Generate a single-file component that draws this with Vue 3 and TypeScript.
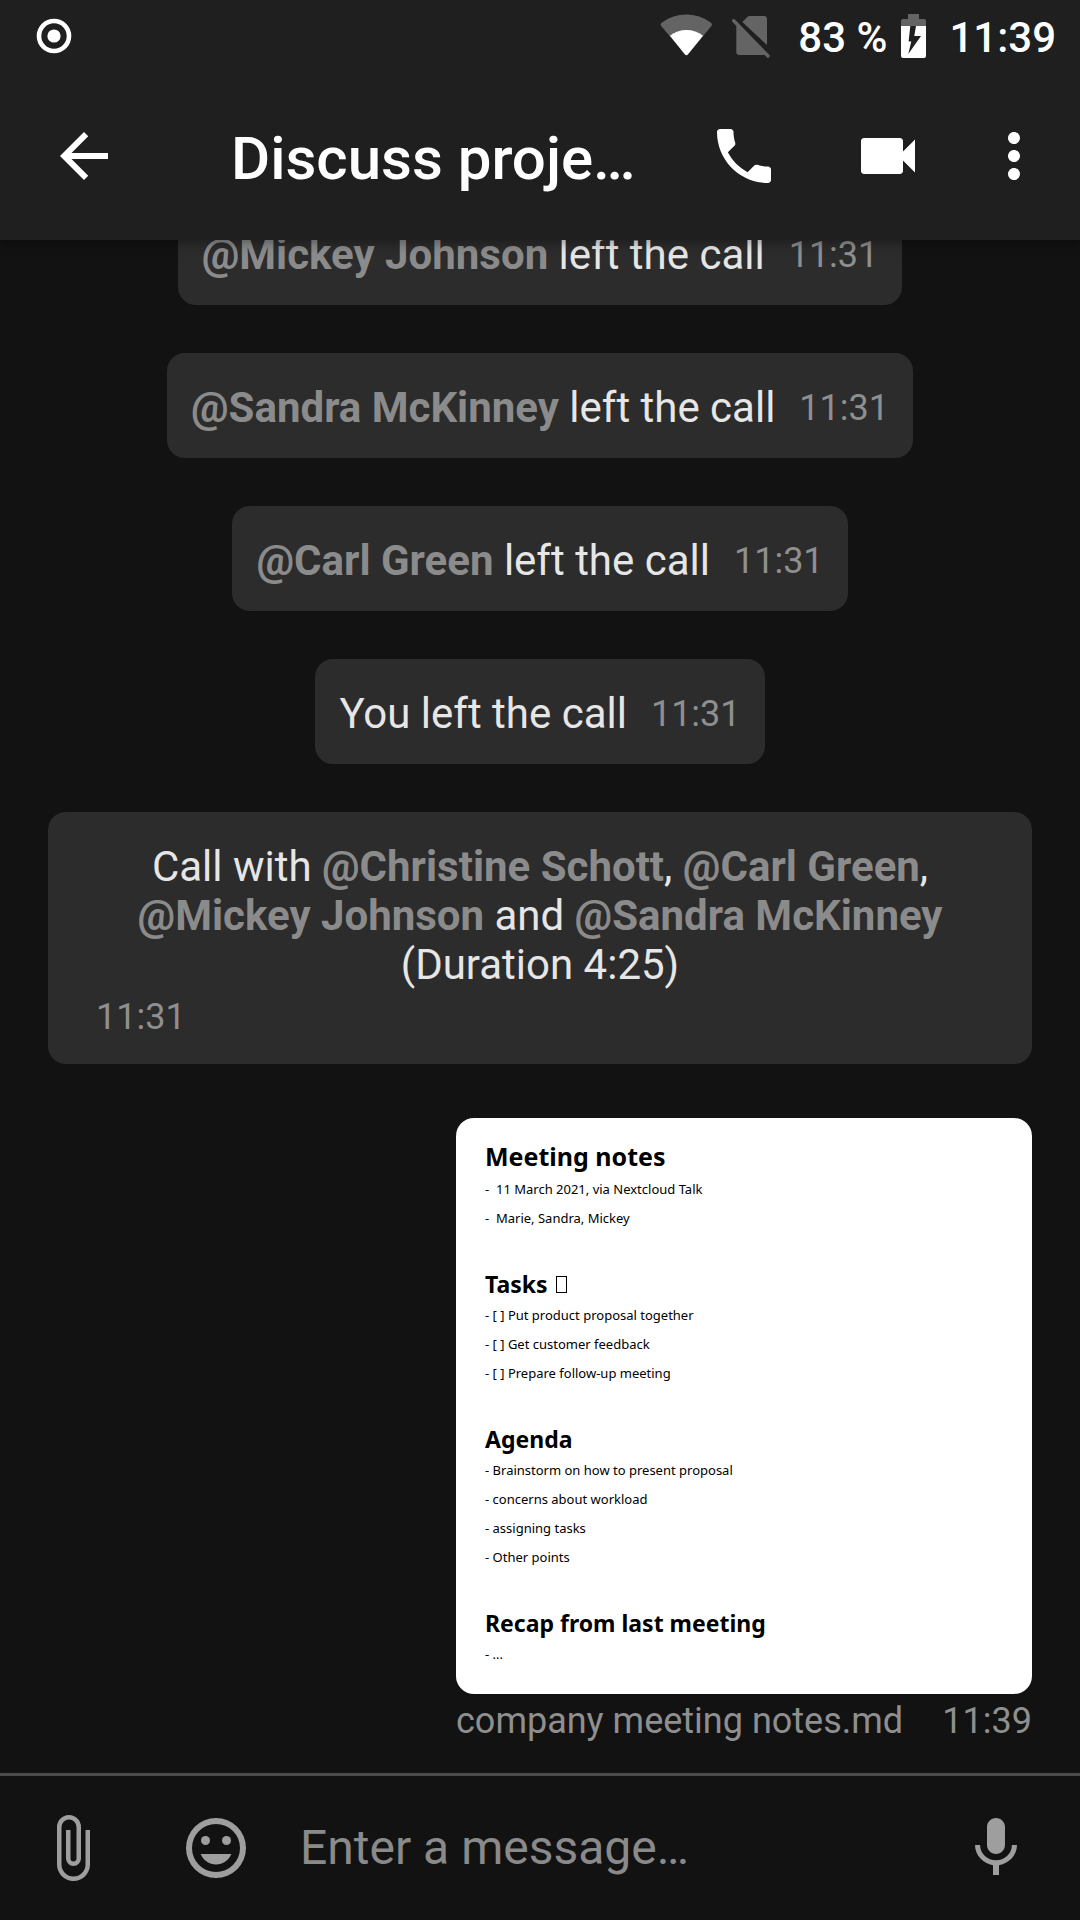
<script setup lang="ts">
import { ref } from 'vue'

interface Part {
  text: string
  mention?: boolean
}

interface SystemMessage {
  id: number
  parts: Part[]
  time: string
}

interface NoteSection {
  title: string
  marker: string
  missingGlyph?: boolean
  items: string[]
}

const leftCall = (id: number, name: string): SystemMessage => ({
  id,
  parts: [{ text: '@' + name, mention: true }, { text: ' left the call' }],
  time: '11:31',
})

const systemMessages: SystemMessage[] = [
  leftCall(1, 'Mickey Johnson'),
  leftCall(2, 'Sandra McKinney'),
  leftCall(3, 'Carl Green'),
  { id: 4, parts: [{ text: 'You left the call' }], time: '11:31' },
  {
    id: 5,
    parts: [
      { text: 'Call with ' },
      { text: '@Christine Schott', mention: true },
      { text: ', ' },
      { text: '@Carl Green', mention: true },
      { text: ', ' },
      { text: '@Mickey Johnson', mention: true },
      { text: ' and ' },
      { text: '@Sandra McKinney', mention: true },
      { text: ' (Duration 4:25)' },
    ],
    time: '11:31',
  },
]

const sections: NoteSection[] = [
  {
    title: 'Meeting notes',
    marker: '-  ',
    items: ['11 March 2021, via Nextcloud Talk', 'Marie, Sandra, Mickey'],
  },
  {
    title: 'Tasks',
    marker: '- [ ] ',
    missingGlyph: true,
    items: ['Put product proposal together', 'Get customer feedback', 'Prepare follow-up meeting'],
  },
  {
    title: 'Agenda',
    marker: '- ',
    items: ['Brainstorm on how to present proposal', 'concerns about workload', 'assigning tasks', 'Other points'],
  },
  { title: 'Recap from last meeting', marker: '- ', items: ['...'] },
]

const draft = ref('')
</script>

<template>
  <div class="screen">
    <header class="top">
      <div class="status">
        <svg class="record" width="36" height="36" viewBox="0 0 36 36" aria-hidden="true">
          <circle cx="18" cy="18" r="15" fill="none" stroke="#fff" stroke-width="4.6" />
          <circle cx="18" cy="18" r="6.6" fill="#fff" />
        </svg>
        <svg class="wifi" width="53" height="44" viewBox="0 0 53 44" aria-hidden="true">
          <path fill="#646464" d="M25 40.4 1.2 12Q-.2 10 2 8.6A41 41 0 0 1 50.6 8.6Q52.8 10 51.4 12L27.8 40.4Q26.4 42 25 40.4Z" />
          <path fill="#fff" d="M25 40.4 10 21.8A26 26 0 0 1 43 21.8L27.8 40.4Q26.4 42 25 40.4Z" />
        </svg>
        <svg class="sim" width="40" height="44" viewBox="0 0 40 44" aria-hidden="true">
          <path fill="#646464" d="M11.3 8 16.3 3Q17.3 2 19 2H33Q36 2 36 5V31Z" />
          <path fill="#646464" d="M5.3 9 36 39.7Q35.200 41 33 41H8.300Q5.300 41 5.300 38Z" />
          <path stroke="#646464" stroke-width="3.400" stroke-linecap="round" d="M2.700 6.700 37 42" />
        </svg>
        <span class="status-text percent">83 %</span>
        <svg class="battery" width="25" height="44" viewBox="0 0 25 44" aria-hidden="true">
          <path fill="#646464" d="M7 0H18V5H23Q25 5 25 7V12H0V7Q0 5 2 5H7Z" />
          <path fill="#fff" d="M0 12H25V42Q25 44 23 44H2Q0 44 0 42Z" />
          <path fill="#1f1f1f" d="M9.300 12H15L13.300 22H20L7.300 40 10.300 27.500H7.600Z" />
        </svg>
        <span class="status-text">11:39</span>
      </div>
      <div class="toolbar">
        <button class="icon" type="button" aria-label="Back">
          <svg viewBox="0 0 24 24"><path d="M20 11H7.830l5.590-5.590L12 4l-8 8 8 8 1.410-1.410L7.830 13H20v-2z" /></svg>
        </button>
        <h1 class="title">Discuss proje…</h1>
        <button class="icon" type="button" aria-label="Voice call">
          <svg viewBox="0 0 24 24"><path d="M6.620 10.790c1.440 2.830 3.760 5.140 6.590 6.590l2.200-2.200c.27-.27.67-.36 1.020-.24 1.120.37 2.330.57 3.570.57.55 0 1 .45 1 1V20c0 .55-.45 1-1 1-9.390 0-17-7.610-17-17 0-.55.45-1 1-1h3.500c.55 0 1 .45 1 1 0 1.250.2 2.450.57 3.570.11.35.03.74-.25 1.020l-2.200 2.200z" /></svg>
        </button>
        <button class="icon video" type="button" aria-label="Video call">
          <svg viewBox="0 0 24 24"><path d="M17 10.500V7c0-.55-.45-1-1-1H4c-.55 0-1 .45-1 1v10c0 .55.45 1 1 1h12c.55 0 1-.45 1-1v-3.500l4 4v-11l-4 4z" /></svg>
        </button>
        <button class="icon more" type="button" aria-label="More options">
          <svg viewBox="0 0 24 24"><path d="M12 8c1.100 0 2-.9 2-2s-.9-2-2-2-2 .9-2 2 .9 2 2 2zm0 2c-1.100 0-2 .9-2 2s.9 2 2 2 2-.9 2-2-.9-2-2-2zm0 6c-1.100 0-2 .9-2 2s.9 2 2 2 2-.9 2-2-.9-2-2-2z" /></svg>
        </button>
      </div>
    </header>

    <main class="scroller">
      <div class="messages">
        <div v-for="message in systemMessages" :key="message.id" class="bubble">
          <p class="text"><span v-for="(part, i) in message.parts" :key="i" :class="{ mention: part.mention }">{{ part.text }}</span></p>
          <time class="time">{{ message.time }}</time>
        </div>

        <article class="outgoing">
          <div class="preview">
            <section v-for="section in sections" :key="section.title" class="note">
              <h2>{{ section.title }}<span v-if="section.missingGlyph" class="glyph"></span></h2>
              <p v-for="item in section.items" :key="item">{{ section.marker + item }}</p>
            </section>
          </div>
          <div class="caption">
            <span>company meeting notes.md</span>
            <time>11:39</time>
          </div>
        </article>
      </div>
    </main>

    <form class="composer" @submit.prevent>
      <button class="icon" type="button" aria-label="Attach a file">
        <svg viewBox="0 0 24 24"><path d="M16.500 6v11.500a4 4 0 0 1-8 0V5a2.500 2.500 0 0 1 5 0v10.500a1 1 0 0 1-2 0V6H10v9.500a2.500 2.500 0 0 0 5 0V5a4 4 0 0 0-8 0v12.500a5.500 5.500 0 0 0 11 0V6h-1.500z" /></svg>
      </button>
      <button class="icon emoji" type="button" aria-label="Insert emoji">
        <svg viewBox="0 0 24 24"><path fill-rule="evenodd" d="M12 2a10 10 0 1 0 0 20 10 10 0 0 0 0-20zM12 20a8 8 0 1 1 0-16 8 8 0 0 1 0 16z" /><circle cx="8.500" cy="9.500" r="1.500" /><circle cx="15.500" cy="9.500" r="1.500" /><path d="M12 17.500c2.330 0 4.310-1.460 5.110-3.500H6.890c.8 2.040 2.780 3.500 5.110 3.500z" /></svg>
      </button>
      <input v-model="draft" class="field" type="text" placeholder="Enter a message…" aria-label="Enter a message" />
      <button class="icon" type="button" aria-label="Record voice message">
        <svg viewBox="0 0 24 24"><path d="M12 14c1.660 0 2.990-1.340 2.990-3L15 5c0-1.660-1.340-3-3-3S9 3.340 9 5v6c0 1.660 1.340 3 3 3zm5.300-3c0 3-2.540 5.100-5.300 5.100S6.700 14 6.700 11H5c0 3.410 2.720 6.230 6 6.720V21h2v-3.280c3.280-.48 6-3.300 6-6.720h-1.700z" /></svg>
      </button>
    </form>
  </div>
</template>

<style>
body {
  margin: 0;
  background: #121212;
}
</style>

<style scoped>
.screen {
  display: flex;
  flex-direction: column;
  height: 100vh;
  background: #121212;
  color: #e6e6e6;
  font-family: Roboto, "Noto Sans", sans-serif;
}

h1,
h2,
p {
  margin: 0;
}

.top {
  position: relative;
  z-index: 1;
  flex: none;
  background: #1f1f1f;
  color: #fff;
  box-shadow: 0 2px 12px rgba(0, 0, 0, 0.4);
}

.status {
  display: flex;
  align-items: center;
  height: 72px;
  padding: 0 24px 0 36px;
}

.status svg {
  flex: none;
}

.wifi {
  margin-left: auto;
}

.sim {
  margin-left: 18px;
}

.status-text {
  padding-top: 2px;
  font-size: 42px;
  font-weight: 500;
  line-height: 49px;
  white-space: nowrap;
}

.percent {
  margin-left: 27px;
}

.battery {
  margin: 0 23px 0 14px;
}

.toolbar {
  display: flex;
  align-items: center;
  height: 168px;
  padding: 0 30px 0 48px;
}

.icon {
  flex: none;
  width: 72px;
  height: 72px;
  padding: 0;
  border: 0;
  background: none;
  color: inherit;
}

.icon svg {
  display: block;
  width: 72px;
  height: 72px;
  fill: currentColor;
}

.title {
  flex: 1;
  min-width: 0;
  padding-top: 5px;
  margin-left: 111px;
  overflow: hidden;
  font-size: 60px;
  font-weight: 500;
  line-height: 70px;
  white-space: nowrap;
}

.video {
  margin-left: 72px;
}

.more {
  margin-left: 54px;
}

/* Reversed column keeps the newest message in view. */
.scroller {
  display: flex;
  flex: 1;
  flex-direction: column-reverse;
  min-height: 0;
  overflow-y: auto;
  scrollbar-width: none;
}

.messages {
  display: flex;
  flex-direction: column;
  align-items: center;
  gap: 48px;
  padding: 0 48px 31px;
}

.bubble {
  display: flex;
  flex-wrap: wrap;
  align-items: center;
  row-gap: 7px;
  box-sizing: border-box;
  max-width: 100%;
  padding: 30px 24px 26px;
  border-radius: 18px;
  background: #2c2c2c;
}

.text {
  font-size: 42px;
  line-height: 49px;
  text-align: center;
}

.mention {
  color: #8b8b8b;
  font-weight: 700;
  white-space: nowrap;
}

.time {
  margin-left: 24px;
  color: #8f8f8f;
  font-size: 36px;
  line-height: 42px;
}

.outgoing {
  align-self: flex-end;
  width: 576px;
  max-width: 100%;
  padding-top: 6px;
}

.preview {
  box-sizing: border-box;
  min-height: 576px;
  padding: 20px 29px;
  border-radius: 18px;
  background: #fff;
  color: #000;
  font-family: "Noto Sans", sans-serif;
}

.note + .note {
  margin-top: 34px;
}

.note h2 {
  font-size: 23px;
  font-weight: 700;
  line-height: 34px;
}

.note:first-child h2 {
  font-size: 25px;
  line-height: 37px;
}

.note p {
  font-size: 13px;
  line-height: 29px;
  white-space: pre;
}

.glyph {
  display: inline-block;
  box-sizing: border-box;
  width: 11px;
  height: 17px;
  margin-left: 8px;
  border: 1px solid #000;
}

.caption {
  display: flex;
  justify-content: space-between;
  padding-top: 6px;
  color: #8f8f8f;
  font-size: 36px;
  line-height: 42px;
}

.composer {
  display: flex;
  flex: none;
  align-items: center;
  height: 144px;
  padding: 0 48px 0 36px;
  border-top: 3px solid #4b4b4b;
  color: #9e9e9e;
}

.emoji {
  margin-left: 72px;
}

.field {
  flex: 1;
  min-width: 0;
  margin: 0 48px;
  padding: 0;
  border: 0;
  outline: 0;
  background: none;
  color: #e6e6e6;
  font: 48px/56px Roboto, "Noto Sans", sans-serif;
}

.field::placeholder {
  color: #8a8a8a;
  opacity: 1;
}
</style>
